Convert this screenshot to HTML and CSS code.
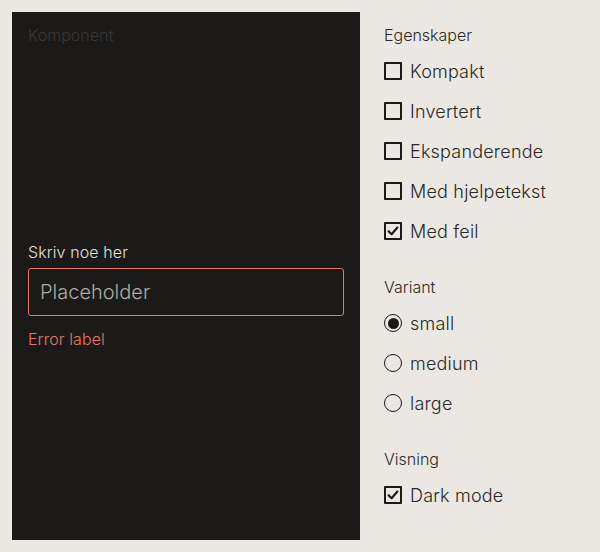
FILE: index.html
```html
<!DOCTYPE html>
<html lang="no">
<head>
<meta charset="utf-8">
<link rel="stylesheet" href="styles.css">
</head>
<body>
<div class="page">
  <section class="preview">
    <div class="preview-title">Komponent</div>
    <div class="preview-body">
      <div class="field">
        <label class="field-label" for="inp">Skriv noe her</label>
        <input id="inp" class="field-input" type="text" placeholder="Placeholder">
        <div class="field-error">Error label</div>
      </div>
    </div>
  </section>
  <aside class="controls">
    <div class="group">
      <div class="group-title">Egenskaper</div>
      <label class="opt"><span class="box"></span>Kompakt</label>
      <label class="opt"><span class="box"></span>Invertert</label>
      <label class="opt"><span class="box"></span>Ekspanderende</label>
      <label class="opt"><span class="box"></span>Med hjelpetekst</label>
      <label class="opt"><span class="box checked"><svg viewBox="0 0 18 18" width="18" height="18"><path d="M4.6 9.2 L7.6 12.2 L13.4 5.6" fill="none" stroke="#1c1a19" stroke-width="2.2" stroke-linecap="round" stroke-linejoin="round"/></svg></span>Med feil</label>
    </div>
    <div class="group">
      <div class="group-title">Variant</div>
      <label class="opt"><span class="radio checked"></span>small</label>
      <label class="opt"><span class="radio"></span>medium</label>
      <label class="opt"><span class="radio"></span>large</label>
    </div>
    <div class="group">
      <div class="group-title">Visning</div>
      <label class="opt"><span class="box checked"><svg viewBox="0 0 18 18" width="18" height="18"><path d="M4.6 9.2 L7.6 12.2 L13.4 5.6" fill="none" stroke="#1c1a19" stroke-width="2.2" stroke-linecap="round" stroke-linejoin="round"/></svg></span>Dark mode</label>
    </div>
  </aside>
</div>
</body>
</html>
```

FILE: styles.css
```css
* { box-sizing: border-box; }
html, body { margin: 0; padding: 0; }
body {
  background: #ebe8e3;
  font-family: Inter, "Noto Sans", "Liberation Sans", sans-serif;
  font-weight: 300;
  color: #1c1a19;
  width: 600px;
  height: 552px;
  overflow: hidden;
}
.page {
  display: flex;
  padding: 12px;
  gap: 24px;
  height: 552px;
}
.preview {
  width: 348px;
  height: 528px;
  background: #1b1a19;
  display: flex;
  flex-direction: column;
  padding: 16px 16px;
}
.preview-title {
  font-size: 16px;
  line-height: 14px;
  color: #3a3836;
}
.preview-body {
  flex: 1;
  display: flex;
  flex-direction: column;
  padding-top: 200px;
}
.field { display: flex; flex-direction: column; }
.field-label {
  font-size: 16px;
  line-height: 20px;
  color: #e4e1dc;
  margin-bottom: 6px;
  letter-spacing: 0.1px;
}
.field-input {
  width: 316px;
  height: 48px;
  background: transparent;
  border: 1px solid #e87866;
  border-radius: 3px;
  padding: 0 11px;
  font-family: inherit;
  font-weight: 300;
  font-size: 20px;
  color: #e4e1dc;
  outline: none;
}
.field-input::placeholder { color: #aeaba6; }
.field-error {
  margin-top: 13px;
  font-size: 16px;
  line-height: 20px;
  color: #e87866;
  letter-spacing: 0.1px;
}
.controls {
  display: flex;
  flex-direction: column;
  padding-top: 14px;
  gap: 27px;
}
.group { display: flex; flex-direction: column; }
.group-title {
  font-size: 16px;
  line-height: 18px;
  color: #2c2a28;
  margin-bottom: 7px;
}
.opt {
  display: flex;
  align-items: center;
  gap: 8px;
  height: 40px;
  font-size: 18px;
  letter-spacing: 0.2px;
  color: #2a2826;
}
.box {
  width: 18px;
  height: 18px;
  border: 2px solid #1c1a19;
  border-radius: 1px;
  display: flex;
  align-items: center;
  justify-content: center;
  flex: none;
  position: relative;
}
.box svg { position: absolute; left: -2px; top: -2px; }
.radio {
  width: 18px;
  height: 18px;
  border: 1.5px solid #1c1a19;
  border-radius: 50%;
  flex: none;
  display: flex;
  align-items: center;
  justify-content: center;
}
.radio.checked::after {
  content: "";
  width: 11px;
  height: 11px;
  border-radius: 50%;
  background: #1c1a19;
}
```
